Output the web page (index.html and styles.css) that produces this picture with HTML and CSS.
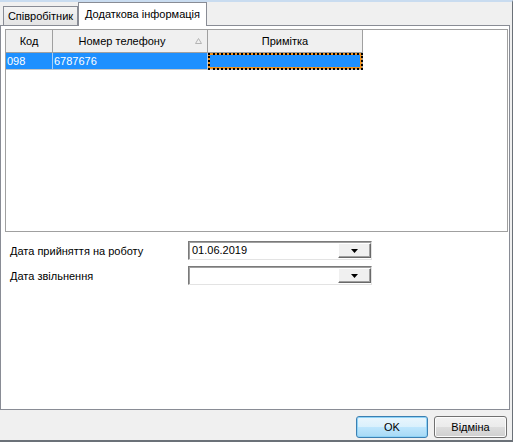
FILE: index.html
```html
<!DOCTYPE html>
<html lang="uk">
<head>
    <meta charset="UTF-8">
    <meta name="viewport" content="width=device-width, initial-scale=1.0">
    <title>Додаткова інформація</title>
    <link rel="stylesheet" href="styles.css">
</head>
<body>

<div class="window">
    <div class="tabs">
        <div class="tab">Співробітник</div>
        <div class="tab active">Додаткова інформація</div>
    </div>

    <div class="panel">
        <div class="grid">
            <table>
                <colgroup>
                    <col class="col-code">
                    <col class="col-phone">
                    <col class="col-note">
                </colgroup>
                <thead>
                    <tr>
                        <th>Код</th>
                        <th class="sorted">Номер телефону
                            <svg class="sort-mark" width="7" height="6" viewBox="0 0 7 6">
                                <path d="M3.5 0.5 L6.5 5.5 L0.5 5.5 Z" fill="none" stroke="#b4b4b4" stroke-width="1"/>
                            </svg>
                        </th>
                        <th>Примітка</th>
                    </tr>
                </thead>
                <tbody>
                    <tr class="selected">
                        <td>098</td>
                        <td>6787676</td>
                        <td class="focus"></td>
                    </tr>
                </tbody>
            </table>
        </div>

        <div class="fields">
            <div class="field">
                <label>Дата прийняття на роботу</label>
                <div class="combo">
                    <span class="combo-value">01.06.2019</span>
                    <span class="combo-btn">
                        <svg width="7" height="4" viewBox="0 0 7 4"><path d="M0 0 H7 L3.5 4 Z" fill="#000"/></svg>
                    </span>
                </div>
            </div>
            <div class="field">
                <label>Дата звільнення</label>
                <div class="combo">
                    <span class="combo-value"></span>
                    <span class="combo-btn">
                        <svg width="7" height="4" viewBox="0 0 7 4"><path d="M0 0 H7 L3.5 4 Z" fill="#000"/></svg>
                    </span>
                </div>
            </div>
        </div>
    </div>

    <div class="footer">
        <button class="btn btn-default">OK</button>
        <button class="btn btn-cancel">Відміна</button>
    </div>
</div>

</body>
</html>
```

FILE: styles.css
```css
* {
    box-sizing: border-box;
}
body {
    margin: 0;
    background: #f0f0f0;
    font-family: "Liberation Sans", Arial, sans-serif;
    font-size: 11px;
    color: #000;
}
.window {
    width: 513px;
    height: 442px;
    border-top: 2px solid #c9dcf0;
    border-right: 1px solid #6b7178;
    border-bottom: 2px solid #6b7178;
    background: #f0f0f0;
}

/* tabs */
.tabs {
    display: flex;
    align-items: flex-end;
    height: 23px;
    padding-left: 3px;
}
.tab {
    width: 75px;
    height: 19px;
    line-height: 19px;
    text-align: center;
    border: 1px solid #898c95;
    border-bottom: none;
    background: linear-gradient(#f4f4f4, #e4e4e4);
    white-space: nowrap;
}
.tab.active {
    position: relative;
    width: 129px;
    height: 24px;
    line-height: 22px;
    margin-bottom: -1px;
    background: #fff;
}

/* tab page */
.panel {
    width: 510px;
    height: 385px;
    border: 1px solid #898c95;
    background: #fff;
    padding: 3px 0 0 4px;
}
.grid {
    width: 503px;
    height: 203px;
    border: 1px solid #a0a0a0;
    background: #fff;
}
table {
    border-collapse: separate;
    border-spacing: 0;
    table-layout: fixed;
    width: 357px;
}
.col-code {
    width: 47px;
}
.col-phone, .col-note {
    width: 155px;
}
th {
    position: relative;
    height: 23px;
    padding: 0;
    font-weight: normal;
    text-align: center;
    background: #f0f0f0;
    border-right: 1px solid #a0a0a0;
    border-bottom: 1px solid #a0a0a0;
}
th.sorted {
    padding-right: 16px;
}
.sort-mark {
    position: absolute;
    right: 5px;
    top: 8px;
}
td {
    height: 17px;
    padding: 0 1px;
    white-space: nowrap;
    border-right: 1px solid #a0a0a0;
    border-bottom: 1px solid #c8c8c8;
}
tr.selected td {
    background: #1e90ff;
    color: #fff;
    border-right-color: #a8cdf5;
}
tr.selected td.focus {
    border-right-color: #a0a0a0;
    box-shadow: inset 0 0 0 2px #f0921e;
    outline: 2px dotted #000;
    outline-offset: -2px;
}

/* date fields */
.fields {
    display: flex;
    flex-direction: column;
    gap: 6px;
    padding-top: 9px;
}
.field {
    display: flex;
    align-items: center;
    height: 19px;
}
.field label {
    width: 183px;
    padding-left: 5px;
}
.combo {
    display: flex;
    align-items: stretch;
    width: 184px;
    height: 19px;
    border: 1px solid;
    border-color: #7a7a7a #e3e3e3 #e3e3e3 #7a7a7a;
    box-shadow: inset 1px 1px 0 #a0a0a0;
    background: #fff;
    padding: 1px 0 1px 1px;
}
.combo-value {
    flex: 1;
    padding-left: 2px;
    line-height: 15px;
}
.combo-btn {
    display: flex;
    align-items: center;
    justify-content: center;
    width: 33px;
    background: #f0f0f0;
    border: 1px solid;
    border-color: #fff #696969 #696969 #fff;
    box-shadow: inset -1px -1px 0 #a0a0a0;
}

/* dialog buttons */
.footer {
    display: flex;
    justify-content: flex-end;
    gap: 6px;
    height: 30px;
    padding: 6px 5px 0 0;
}
.btn {
    height: 22px;
    padding: 0;
    font-family: inherit;
    font-size: 11px;
    color: #000;
    border: 1px solid #707070;
    border-radius: 3px;
    background: linear-gradient(#f2f2f2 0%, #ebebeb 50%, #dddddd 50%, #cfcfcf 100%);
    box-shadow: inset 0 0 0 1px #fcfcfc;
}
.btn-default {
    width: 72px;
    border-color: #3c7fb1;
    background: linear-gradient(#eaf6fd 0%, #d9f0fc 50%, #bee6fd 50%, #a7d9f5 100%);
    box-shadow: inset 0 0 0 1px #8fd3f7;
}
.btn-cancel {
    width: 73px;
}
```
